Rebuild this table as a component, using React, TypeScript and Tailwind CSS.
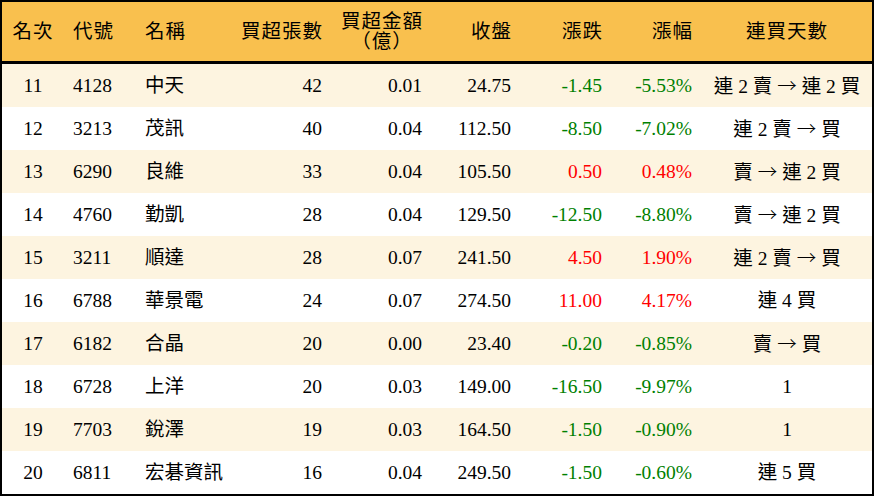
import React from 'react';

type Row = {
  rank: number;
  code: string;
  name: string;
  lots: number;
  amount: string;
  close: string;
  change: string;
  pct: string;
  streak: string;
};

const rows: Row[] = [
  { rank: 11, code: '4128', name: '中天', lots: 42, amount: '0.01', close: '24.75', change: '-1.45', pct: '-5.53%', streak: '連 2 賣 → 連 2 買' },
  { rank: 12, code: '3213', name: '茂訊', lots: 40, amount: '0.04', close: '112.50', change: '-8.50', pct: '-7.02%', streak: '連 2 賣 → 買' },
  { rank: 13, code: '6290', name: '良維', lots: 33, amount: '0.04', close: '105.50', change: '0.50', pct: '0.48%', streak: '賣 → 連 2 買' },
  { rank: 14, code: '4760', name: '勤凱', lots: 28, amount: '0.04', close: '129.50', change: '-12.50', pct: '-8.80%', streak: '賣 → 連 2 買' },
  { rank: 15, code: '3211', name: '順達', lots: 28, amount: '0.07', close: '241.50', change: '4.50', pct: '1.90%', streak: '連 2 賣 → 買' },
  { rank: 16, code: '6788', name: '華景電', lots: 24, amount: '0.07', close: '274.50', change: '11.00', pct: '4.17%', streak: '連 4 買' },
  { rank: 17, code: '6182', name: '合晶', lots: 20, amount: '0.00', close: '23.40', change: '-0.20', pct: '-0.85%', streak: '賣 → 買' },
  { rank: 18, code: '6728', name: '上洋', lots: 20, amount: '0.03', close: '149.00', change: '-16.50', pct: '-9.97%', streak: '1' },
  { rank: 19, code: '7703', name: '銳澤', lots: 19, amount: '0.03', close: '164.50', change: '-1.50', pct: '-0.90%', streak: '1' },
  { rank: 20, code: '6811', name: '宏碁資訊', lots: 16, amount: '0.04', close: '249.50', change: '-1.50', pct: '-0.60%', streak: '連 5 買' },
];

const cols = 'grid grid-cols-[62px_72px_94px_102px_100px_89px_91px_90px_1fr]';

// arrow drawn with the CJK font so it gets a full-width, thin glyph like the reference
function Streak({ text }: { text: string }) {
  const parts = text.split('→');
  return (
    <div className="text-center whitespace-pre">
      {parts.map((p, i) => (
        <React.Fragment key={i}>
          {i > 0 && <span style={{ fontFamily: '"Noto Sans CJK TC", sans-serif' }} className="font-light">→</span>}
          {p}
        </React.Fragment>
      ))}
    </div>
  );
}

export default function App() {
  return (
    <div
      className="w-[874px] h-[496px] border-2 border-black bg-white text-black text-[19.5px] overflow-hidden"
      style={{ fontFamily: '"Liberation Serif", "Noto Sans CJK TC", serif' }}
    >
      {/* Header */}
      <div className={`${cols} h-[59px] bg-[#f9c04e] border-b-[3px] border-black items-center box-content tracking-[1px]`}>
        <div className="text-center">名次</div>
        <div className="pl-[9px]">代號</div>
        <div className="pl-[9px]">名稱</div>
        <div className="text-right pr-[9px]">買超張數</div>
        <div className="flex justify-end pr-[9px]">
          <div className="text-center leading-[20px]">
            <div>買超金額</div>
            <div>（億）</div>
          </div>
        </div>
        <div className="text-right pr-[9px]">收盤</div>
        <div className="text-right pr-[9px]">漲跌</div>
        <div className="text-right pr-[9px]">漲幅</div>
        <div className="text-center">連買天數</div>
      </div>

      {/* Rows */}
      {rows.map((r, i) => {
        const up = !r.change.startsWith('-');
        const color = up ? 'text-[#ff0000]' : 'text-[#008000]';
        return (
          <div
            key={r.rank}
            className={`${cols} h-[43px] items-center ${i % 2 === 0 ? 'bg-[#fdf4e0]' : 'bg-white'}`}
          >
            <div className="text-center">{r.rank}</div>
            <div className="pl-[9px]">{r.code}</div>
            <div className="pl-[9px]">{r.name}</div>
            <div className="text-right pr-[10px]">{r.lots}</div>
            <div className="text-right pr-[10px]">{r.amount}</div>
            <div className="text-right pr-[10px]">{r.close}</div>
            <div className={`text-right pr-[10px] ${color}`}>{r.change}</div>
            <div className={`text-right pr-[10px] ${color}`}>{r.pct}</div>
            <Streak text={r.streak} />
          </div>
        );
      })}
    </div>
  );
}
